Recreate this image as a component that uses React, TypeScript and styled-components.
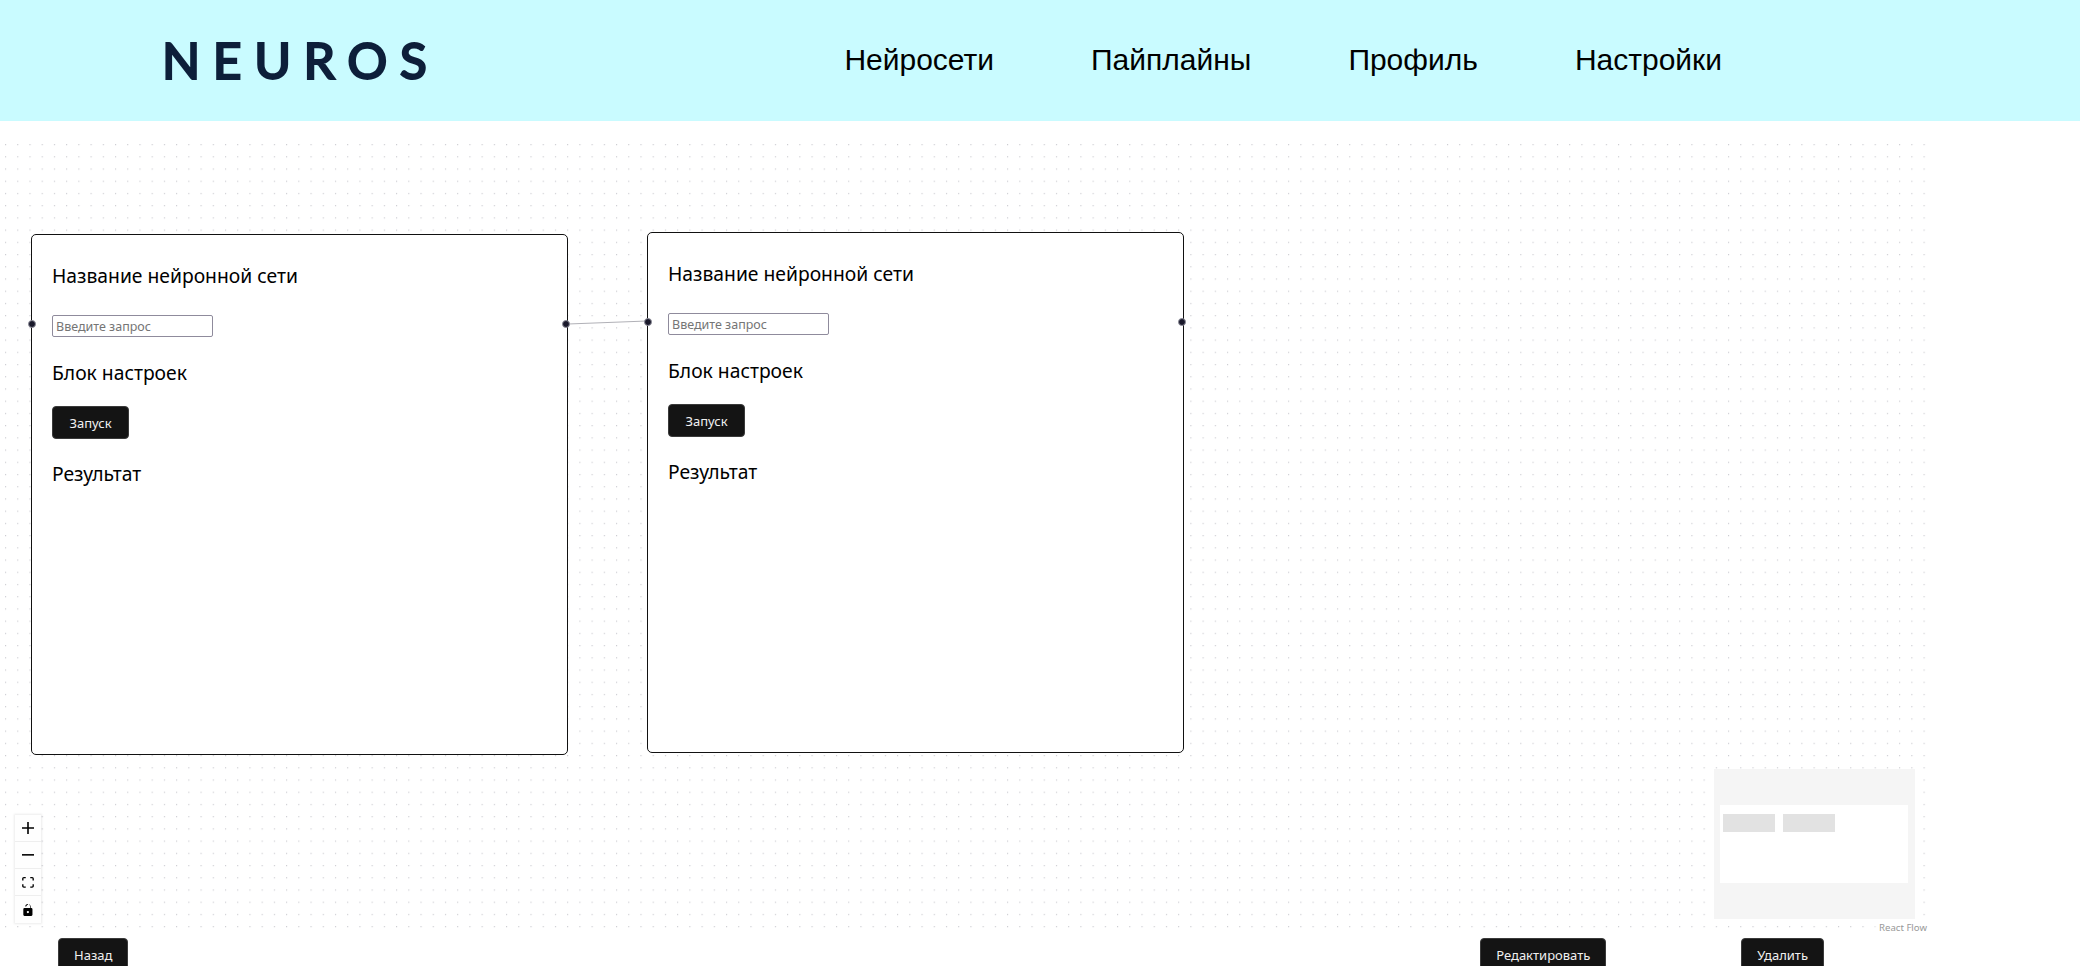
import styled, { createGlobalStyle } from "styled-components";

const GlobalStyle = createGlobalStyle`
  html, body {
    margin: 0;
    height: 100%;
    overflow: hidden;
    background: #fff;
  }
  #root {
    height: 100%;
  }
`;

const NAV_ITEMS = ["Нейросети", "Пайплайны", "Профиль", "Настройки"];

const App = () => {
  return (
    <StPage>
      <GlobalStyle />
      <StHeader>
        <StLogo>NEUROS</StLogo>
        <StNav>
          {NAV_ITEMS.map((item) => (
            <StNavLink key={item}>{item}</StNavLink>
          ))}
        </StNav>
      </StHeader>

      <StFlow>
        <StDots>
          <defs>
            <pattern id="dots" x="5" y="4" width="12.22" height="12.22" patternUnits="userSpaceOnUse">
              <circle cx="0.6" cy="0.6" r="0.6" fill="#c0c0c6" />
            </pattern>
          </defs>
          <rect width="100%" height="100%" fill="url(#dots)" />
        </StDots>

        <StEdge>
          <line x1="568" y1="184" x2="647" y2="181" stroke="#b1b1b7" strokeWidth="1" />
        </StEdge>

        <PipelineNode $left={31} $top={94} />
        <PipelineNode $left={647} $top={92} />

        <StControls>
          <StControl>
            <svg viewBox="0 0 32 32" width="12" height="12">
              <path d="M32 18.133H18.133V32h-4.266V18.133H0v-4.266h13.867V0h4.266v13.867H32z" />
            </svg>
          </StControl>
          <StControl>
            <svg viewBox="0 0 32 5" width="12" height="2">
              <path d="M0 0h32v4.2H0z" />
            </svg>
          </StControl>
          <StControl>
            <svg viewBox="0 0 32 30" width="12" height="11">
              <path d="M3.692 4.63c0-.53.4-.938.939-.938h5.215V0H4.708C2.13 0 0 2.054 0 4.63v5.216h3.692V4.631zM27.354 0h-5.2v3.692h5.17c.53 0 .984.4.984.939v5.215H32V4.631A4.624 4.624 0 0027.354 0zm.954 24.83c0 .532-.4.94-.939.94h-5.215v3.768h5.215c2.577 0 4.631-2.13 4.631-4.707v-5.139h-3.692v5.139zm-23.677.94c-.531 0-.939-.4-.939-.94v-5.138H0v5.139c0 2.577 2.13 4.707 4.708 4.707h5.138V25.77H4.631z" />
            </svg>
          </StControl>
          <StControl>
            <svg viewBox="0 0 25 32" width="10" height="12">
              <path d="M21.333 10.667H19.81V7.619C19.81 3.429 16.38 0 12.19 0c1.828 0 3.2 1.2 4.4 2.6 1 1.3 1.5 3 1.5 5v3.067H3.048A3.056 3.056 0 000 13.714v15.238A3.056 3.056 0 003.048 32h18.285a3.056 3.056 0 003.048-3.048V13.714a3.056 3.056 0 00-3.048-3.047zM12.19 24.533a3.056 3.056 0 01-3.047-3.047 3.056 3.056 0 013.047-3.048 3.056 3.056 0 013.048 3.048 3.056 3.056 0 01-3.048 3.047zM12.19 0C8.1 0 5.2 3 5.2 6.5h2.6C8 4 9.800 2.400 12.190 2.400z" />
            </svg>
          </StControl>
        </StControls>

        <StMiniMap viewBox="0 0 201 150">
          <rect width="201" height="150" fill="#f5f5f5" />
          <rect x="6" y="36" width="188" height="78" fill="#fff" />
          <rect x="9" y="45" width="52" height="18" fill="#e2e2e2" />
          <rect x="69" y="45" width="52" height="18" fill="#e2e2e2" />
        </StMiniMap>

        <StAttribution>React Flow</StAttribution>
      </StFlow>

      <StFooter>
        <StButton>Назад</StButton>
        <StFooterRight>
          <StButton>Редактировать</StButton>
          <StButton>Удалить</StButton>
        </StFooterRight>
      </StFooter>
    </StPage>
  );
};

export default App;

interface PipelineNodeProps {
  $left: number;
  $top: number;
}
const PipelineNode = (props: PipelineNodeProps) => {
  const { $left, $top } = props;
  return (
    <StNode $left={$left} $top={$top}>
      <StHandle $side="left" />
      <StHandle $side="right" />
      <StNodeTitle>Название нейронной сети</StNodeTitle>
      <StInput placeholder="Введите запрос" />
      <StNodeTitle>Блок настроек</StNodeTitle>
      <StRunButton>Запуск</StRunButton>
      <StNodeTitle>Результат</StNodeTitle>
    </StNode>
  );
};

const StPage = styled.div`
  display: flex;
  flex-direction: column;
  height: 966px;
  overflow: hidden;

  font-family: "Noto Sans", sans-serif;
`;
const StHeader = styled.header`
  display: flex;
  flex-shrink: 0;
  align-items: center;

  height: 121px;
  padding: 0 358px 0 162px;

  background-color: #c9fbff;
`;
const StLogo = styled.div`
  margin-top: -2px;

  color: #0d1f3a;
  font-family: "Lato", sans-serif;
  font-size: 50px;
  font-weight: 500;
  line-height: 1;
  letter-spacing: 0.25em;

  -webkit-text-stroke: 2px #0d1f3a;
`;
const StNav = styled.nav`
  display: flex;
  gap: 97px;

  margin-top: -2px;
  margin-left: auto;
`;
const StNavLink = styled.a`
  color: #000;
  font-family: "Liberation Sans", sans-serif;
  font-size: 30px;
`;
const StFlow = styled.section`
  position: relative;
  flex-shrink: 0;

  width: 1930px;
  height: 798px;
  margin-top: 19px;
`;
const StDots = styled.svg`
  position: absolute;
  inset: 0;

  width: 100%;
  height: 100%;
`;
const StEdge = styled.svg`
  position: absolute;
  inset: 0;

  width: 100%;
  height: 100%;
`;
const StNode = styled.article<PipelineNodeProps>`
  position: absolute;
  top: ${({ $top }) => $top}px;
  left: ${({ $left }) => $left}px;

  display: flex;
  flex-direction: column;
  align-items: flex-start;

  box-sizing: border-box;
  width: 537px;
  height: 521px;
  padding: 27px 20px;

  border: 1px solid #111;
  border-radius: 5px;
  background-color: #fff;
`;
const StHandle = styled.span<{ $side: "left" | "right" }>`
  position: absolute;
  top: 85px;
  ${({ $side }) => ($side === "left" ? "left: -4px;" : "right: -3px;")}

  box-sizing: border-box;
  width: 8px;
  height: 8px;

  border: 1px solid #8d8d99;
  border-radius: 50%;
  background-color: #1a192b;
`;
const StNodeTitle = styled.h3`
  margin: 0;

  color: #000;
  font-size: 19.3px;
  font-weight: 400;
  line-height: 28px;
`;
const StInput = styled.input`
  box-sizing: border-box;
  width: 161px;
  height: 22px;
  margin: 25px 0 22px;
  padding: 0 3px;

  border: 1px solid #8f8b9c;
  border-radius: 2px;
  background: #fff;
  font-family: "Noto Sans", sans-serif;
  font-size: 12.5px;

  &::placeholder {
    color: #757575;
  }
`;
const StRunButton = styled.button`
  width: 77px;
  height: 33px;
  margin: 19px 0 21px;
  padding: 0;

  border: 1px solid #3a3a3a;
  border-radius: 4px;
  background-color: #141414;
  color: #f0f0f0;
  font-family: "Noto Sans", sans-serif;
  font-size: 13px;
`;
const StControls = styled.div`
  position: absolute;
  top: 675px;
  left: 15px;

  display: flex;
  flex-direction: column;

  box-shadow: 0 0 2px 1px rgba(0, 0, 0, 0.08);
`;
const StControl = styled.button`
  display: flex;
  justify-content: center;
  align-items: center;

  box-sizing: border-box;
  width: 26px;
  height: 27px;
  padding: 5px;

  border: none;
  border-bottom: 1px solid #eee;
  background: #fefefe;
  color: #000;

  &:last-child {
    border-bottom: none;
  }
`;
const StMiniMap = styled.svg`
  position: absolute;
  top: 629px;
  left: 1714px;

  width: 201px;
  height: 150px;
`;
const StAttribution = styled.span`
  position: absolute;
  right: 3px;
  bottom: 2px;

  padding: 2px 0 2px 4px;

  background: rgba(255, 255, 255, 0.5);
  color: #999;
  font-size: 9.6px;
  line-height: 12px;
`;
const StFooter = styled.footer`
  display: flex;
  flex-shrink: 0;
  justify-content: space-between;

  padding: 0 256px 0 58px;
`;
const StFooterRight = styled.div`
  display: flex;
  gap: 135px;
`;
const StButton = styled.button`
  height: 34px;
  padding: 0 15px;

  border: 1px solid #3a3a3a;
  border-radius: 4px;
  background-color: #141414;
  color: #f0f0f0;
  font-family: "Noto Sans", sans-serif;
  font-size: 13px;
`;
